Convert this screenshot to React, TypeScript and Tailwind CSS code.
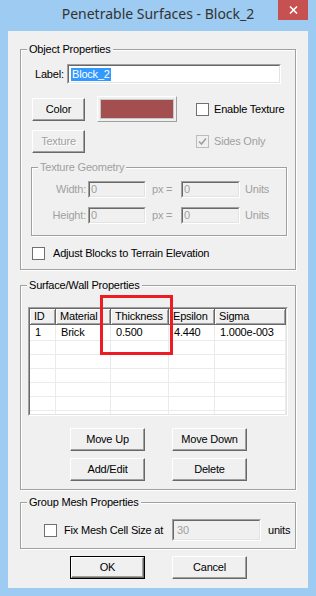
import type { ReactNode } from "react";

const font = "font-['Liberation_Sans',Arial,sans-serif] text-[11px] leading-[13px] tracking-[-0.2px] whitespace-nowrap";

function Btn({ children, disabled, isDefault }: { children: ReactNode; disabled?: boolean; isDefault?: boolean }) {
  if (isDefault) {
    return (
      <div className="w-[75px] h-[23px] border border-black">
        <div className="h-full flex items-center justify-center bg-[#f0f0f0] border border-t-white border-l-white border-b-[#696969] border-r-[#696969] shadow-[inset_-1px_-1px_0_#a0a0a0] text-black">
          {children}
        </div>
      </div>
    );
  }
  return (
    <div
      className={
        disabled
          ? "w-[53px] h-[23px] flex items-center justify-center bg-[#f0f0f0] border border-t-white border-l-white border-b-[#696969] border-r-[#696969] shadow-[inset_-1px_-1px_0_#a0a0a0] text-[#a0a0a0] [text-shadow:1px_1px_0_#fff]"
          : "h-[23px] flex items-center justify-center bg-[#f0f0f0] border border-t-white border-l-white border-b-[#696969] border-r-[#696969] shadow-[inset_-1px_-1px_0_#a0a0a0] text-black"
      }
    >
      {children}
    </div>
  );
}

function Check({ checked, disabled }: { checked?: boolean; disabled?: boolean }) {
  return (
    <div
      className={
        disabled
          ? "w-[13px] h-[13px] border border-[#bcbcbc] bg-[#f0f0f0] flex items-center justify-center"
          : "w-[13px] h-[13px] border border-[#707070] bg-white flex items-center justify-center"
      }
    >
      {checked && (
        <svg width="9" height="9" viewBox="0 0 9 9">
          <path d="M1 4.5 L3.5 7 L8 1.5" fill="none" stroke={disabled ? "#a0a0a0" : "#000"} strokeWidth="1.6" />
        </svg>
      )}
    </div>
  );
}

function Sunken({ className, children, disabled }: { className: string; children?: ReactNode; disabled?: boolean }) {
  return (
    <div className={`${className} border border-t-[#a0a0a0] border-l-[#a0a0a0] border-b-white border-r-white`}>
      <div
        className={
          disabled
            ? "h-full border border-t-[#696969] border-l-[#696969] border-b-[#e3e3e3] border-r-[#e3e3e3] bg-[#f0f0f0] text-[#a0a0a0] flex items-center pl-[1px]"
            : "h-full border border-t-[#696969] border-l-[#696969] border-b-[#e3e3e3] border-r-[#e3e3e3] bg-white flex items-center pl-[2px]"
        }
      >
        {children}
      </div>
    </div>
  );
}

function Group({ title, className, gray, children }: { title: string; className: string; gray?: boolean; children: ReactNode }) {
  return (
    <div className={`relative border border-[#a0a0a0] shadow-[inset_1px_1px_0_#fff,1px_1px_0_#fff] ${className}`}>
      <span
        className={
          gray
            ? "absolute -top-[7px] left-[6px] px-[2px] bg-[#f0f0f0] text-[#a0a0a0]"
            : "absolute -top-[7px] left-[6px] px-[2px] bg-[#f0f0f0] text-black"
        }
      >
        {title}
      </span>
      {children}
    </div>
  );
}

const cols = [
  { name: "ID", w: "w-[26px]", v: "1" },
  { name: "Material", w: "w-[55px]", v: "Brick" },
  { name: "Thickness", w: "w-[58px]", v: "0.500" },
  { name: "Epsilon", w: "w-[46px]", v: "4.440" },
  { name: "Sigma", w: "w-[71px]", v: "1.000e-003" },
];

function ListView() {
  return (
    <div className="ml-[7px] w-[260px] h-[109px] border border-t-[#a0a0a0] border-l-[#a0a0a0] border-b-white border-r-white">
      <div className="h-full border border-t-[#696969] border-l-[#696969] border-b-[#e3e3e3] border-r-[#e3e3e3] bg-white overflow-hidden">
        <div className="flex h-[16px]">
          {cols.map((c) => (
            <div
              key={c.name}
              className={`${c.w} shrink-0 pl-[4px] flex items-center overflow-hidden bg-[#f0f0f0] border-r border-b border-[#696969] shadow-[inset_1px_1px_0_#fff,inset_-1px_-1px_0_#a0a0a0]`}
            >
              {c.name}
            </div>
          ))}
          <div className="flex-1 bg-[#f0f0f0] border-b border-[#696969]" />
        </div>
        {[0, 1, 2, 3, 4, 5, 6].map((r) => (
          <div key={r} className={r === 0 ? "flex h-[16px]" : "flex h-[14px]"}>
            {cols.map((c) => (
              <div key={c.name} className={`${c.w} shrink-0 pl-[5px] flex items-center border-r border-b border-[#ebebeb]`}>
                {r === 0 ? c.v : ""}
              </div>
            ))}
          </div>
        ))}
      </div>
    </div>
  );
}

export default function App() {
  return (
    <div className={`relative w-[316px] h-[596px] bg-[#9ecbf2] flex flex-col px-[8px] pb-[8px] ${font}`}>
      <div className="h-[31px] flex items-center justify-center font-['Noto_Sans',sans-serif] text-[14px] leading-[20px] tracking-normal text-[#333] pb-[3px]">
        Penetrable Surfaces - Block_2
      </div>
      <div className="absolute top-0 right-[8px] w-[30px] h-[20px] bg-[#c75050] flex items-center justify-center">
        <svg width="9" height="8" viewBox="0 0 9 8">
          <path d="M1 0.5 L8 7.5 M8 0.5 L1 7.5" stroke="#fff" strokeWidth="1.6" />
        </svg>
      </div>

      <div className="flex-1 bg-[#f0f0f0] px-[12px] pt-[18px] text-black">
        <Group title="Object Properties" className="pb-[9px]">
          <div className="mt-[14px] pl-[14px] flex items-center">
            <span className="w-[32px]">Label:</span>
            <Sunken className="w-[214px] h-[20px]">
              <span className="bg-[#3399ff] text-white px-[1px]">Block_2</span>
            </Sunken>
          </div>
          <div className="mt-[12px] pl-[11px] h-[26px] flex items-center">
            <div className="w-[53px]">
              <Btn>Color</Btn>
            </div>
            <div className="ml-[12px] w-[80px] h-[26px] border border-t-white border-l-white border-b-[#a0a0a0] border-r-[#a0a0a0] bg-[#f0f0f0] p-[2px]">
              <div className="h-full bg-[#a34f50] border border-[#c8c8c8]" />
            </div>
            <div className="ml-[19px]">
              <Check />
            </div>
            <span className="ml-[5px]">Enable Texture</span>
          </div>
          <div className="mt-[8px] pl-[11px] h-[23px] flex items-center">
            <Btn disabled>Texture</Btn>
            <div className="ml-[111px]">
              <Check checked disabled />
            </div>
            <span className="ml-[5px] text-[#a0a0a0]">Sides Only</span>
          </div>

          <Group title="Texture Geometry" gray className="mt-[14px] ml-[10px] w-[256px] pb-[11px] text-[#a0a0a0]">
            <div className="mt-[13px] flex items-center h-[17px]">
              <span className="w-[56px] text-right pr-[2px]">Width:</span>
              <Sunken className="w-[58px] h-[17px]" disabled>0</Sunken>
              <span className="ml-[6px] w-[29px]">px =</span>
              <Sunken className="w-[59px] h-[17px]" disabled>0</Sunken>
              <span className="ml-[5px]">Units</span>
            </div>
            <div className="mt-[9px] flex items-center h-[17px]">
              <span className="w-[56px] text-right pr-[2px]">Height:</span>
              <Sunken className="w-[58px] h-[17px]" disabled>0</Sunken>
              <span className="ml-[6px] w-[29px]">px =</span>
              <Sunken className="w-[59px] h-[17px]" disabled>0</Sunken>
              <span className="ml-[5px]">Units</span>
            </div>
          </Group>

          <div className="mt-[11px] pl-[11px] h-[13px] flex items-center">
            <Check />
            <span className="ml-[8px]">Adjust Blocks to Terrain Elevation</span>
          </div>
        </Group>

        <Group title="Surface/Wall Properties" className="mt-[15px] pb-[8px]">
          <div className="mt-[21px]">
            <ListView />
          </div>
          <div className="mt-[12px] pl-[49px] flex gap-[27px]">
            <div className="w-[75px]"><Btn>Move Up</Btn></div>
            <div className="w-[75px]"><Btn>Move Down</Btn></div>
          </div>
          <div className="mt-[7px] pl-[49px] flex gap-[27px]">
            <div className="w-[75px]"><Btn>Add/Edit</Btn></div>
            <div className="w-[75px]"><Btn>Delete</Btn></div>
          </div>
          <div className="pointer-events-none absolute left-[79px] top-[9px] w-[73px] h-[60px] border-[3px] border-[#ed1c24]" />
        </Group>

        <Group title="Group Mesh Properties" className="mt-[12px] pb-[7px]">
          <div className="mt-[16px] pl-[23px] h-[22px] flex items-center">
            <Check />
            <span className="ml-[7px] w-[108px]">Fix Mesh Cell Size at</span>
            <Sunken className="w-[89px] h-[22px]" disabled>
              <span className="pl-[2px]">30</span>
            </Sunken>
            <span className="ml-[7px]">units</span>
          </div>
        </Group>

        <div className="mt-[7px] pl-[50px] flex gap-[27px]">
          <Btn isDefault>OK</Btn>
          <div className="w-[75px]"><Btn>Cancel</Btn></div>
        </div>
      </div>
    </div>
  );
}
